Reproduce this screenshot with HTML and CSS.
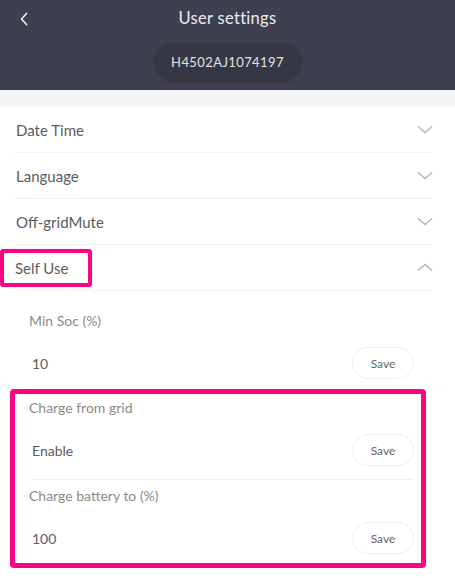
FILE: index.html
```html
<!DOCTYPE html>
<html lang="en">
  <head>
    <meta charset="utf-8" />
    <title>User settings</title>
    <link rel="stylesheet" href="styles.css">
  </head>
  <body>
    <!--Top bar with back arrow, title and serial number-->
    <div class="header">
      <div class="topBar">
        <svg class="back" width="10" height="14" viewBox="0 0 10 14">
          <path d="M7.5 1.5 L2.5 7 L7.5 12.5" fill="none" stroke="#e6e6ea" stroke-width="1.8" stroke-linecap="round" stroke-linejoin="round"/>
        </svg>
        <span class="title">User settings</span>
      </div>
      <div class="serial">H4502AJ1074197</div>
    </div>
    <div class="strip"></div>

    <!--Settings list-->
    <div class="list">
      <div class="row">
        <span class="rowLabel">Date Time</span>
        <svg class="chev" width="16" height="9" viewBox="0 0 16 9"><path d="M1 1.5 L8 7.5 L15 1.5" fill="none" stroke="#b4b4b4" stroke-width="1.4"/></svg>
      </div>
      <div class="row">
        <span class="rowLabel">Language</span>
        <svg class="chev" width="16" height="9" viewBox="0 0 16 9"><path d="M1 1.5 L8 7.5 L15 1.5" fill="none" stroke="#b4b4b4" stroke-width="1.4"/></svg>
      </div>
      <div class="row">
        <span class="rowLabel">Off-gridMute</span>
        <svg class="chev" width="16" height="9" viewBox="0 0 16 9"><path d="M1 1.5 L8 7.5 L15 1.5" fill="none" stroke="#b4b4b4" stroke-width="1.4"/></svg>
      </div>
      <div class="row">
        <span class="rowLabel mark">Self Use</span>
        <svg class="chev" width="16" height="9" viewBox="0 0 16 9"><path d="M1 7.5 L8 1.5 L15 7.5" fill="none" stroke="#b4b4b4" stroke-width="1.4"/></svg>
      </div>
    </div>

    <!--Self Use options-->
    <div class="options">
      <div class="field first">
        <div class="fieldLabel">Min Soc (%)</div>
        <div class="valueRow">
          <span class="value">10</span>
          <span class="saveBtn">Save</span>
        </div>
      </div>

      <div class="markBox">
        <div class="field">
          <div class="fieldLabel">Charge from grid</div>
          <div class="valueRow">
            <span class="value">Enable</span>
            <span class="saveBtn">Save</span>
          </div>
        </div>
        <div class="divider"></div>
        <div class="field">
          <div class="fieldLabel">Charge battery to (%)</div>
          <div class="valueRow">
            <span class="value">100</span>
            <span class="saveBtn">Save</span>
          </div>
        </div>
      </div>
    </div>
  </body>
</html>
```

FILE: styles.css
```css
body {margin: 0;
      width: 455px;
      font-family: Lato, "Open Sans", sans-serif;
      background-color: white;
      color: #5c5c5c;}

.header {height: 90px;
         background-color: #3e3f50;
         display: flex;
         flex-direction: column;
         align-items: center;}

.topBar {width: 100%;
         height: 36px;
         display: flex;
         align-items: center;
         justify-content: center;
         position: relative;}

.back {position: absolute;
       left: 19px;
       top: 12px;}

.title {font-size: 16.5px;
        color: #ececf0;
        letter-spacing: 0.3px;}

.serial {margin-top: 7px;
         width: 146px;
         height: 37px;
         border-radius: 19px;
         background-color: #363745;
         box-shadow: 0 1px 4px rgba(0,0,0,0.25);
         color: #e2e2e6;
         font-size: 13px;
         letter-spacing: 0.4px;
         display: flex;
         align-items: center;
         justify-content: center;}

.strip {height: 17px;
        background-color: #f5f5f5;}

.list {margin: 0 23px 0 15px;}

.row {height: 45px;
      border-bottom: 1px solid #f0f0f0;
      display: flex;
      align-items: center;
      justify-content: space-between;
      padding-left: 1px;}

.rowLabel {font-size: 15px;
           color: #5c5c5c;}

.chev {margin-right: -1px;}

.mark {margin-left: -16px;
       padding: 6px 20px 6px 11px;
       border: 4px solid #fc0483;
       border-radius: 3px;}

.options {padding-bottom: 10px;}

.field {padding: 6px 0 0 0;}

.field.first {padding: 20px 41px 0 29px;}

.markBox .field:first-child {padding-top: 4px;}

.fieldLabel {height: 20px;
             line-height: 20px;
             font-size: 14px;
             color: #8a8a8a;}

.valueRow {margin-top: 16px;
           height: 32px;
           display: flex;
           align-items: center;
           justify-content: space-between;}

.value {font-size: 14px;
        color: #5c5c5c;
        padding-left: 3px;}

.saveBtn {width: 60px;
          height: 30px;
          border: 1px solid #efefef;
          border-radius: 16px;
          font-size: 12px;
          color: #666;
          display: flex;
          align-items: center;
          justify-content: center;}

.markBox {margin: 10px 29px 0 10px;
          padding: 0 7px 9px 14px;
          border: 5px solid #fc0483;
          border-radius: 4px;}

.divider {margin: 13px 1px 0 3px;
          border-top: 1px solid #efefef;
          height: 0;}
```
